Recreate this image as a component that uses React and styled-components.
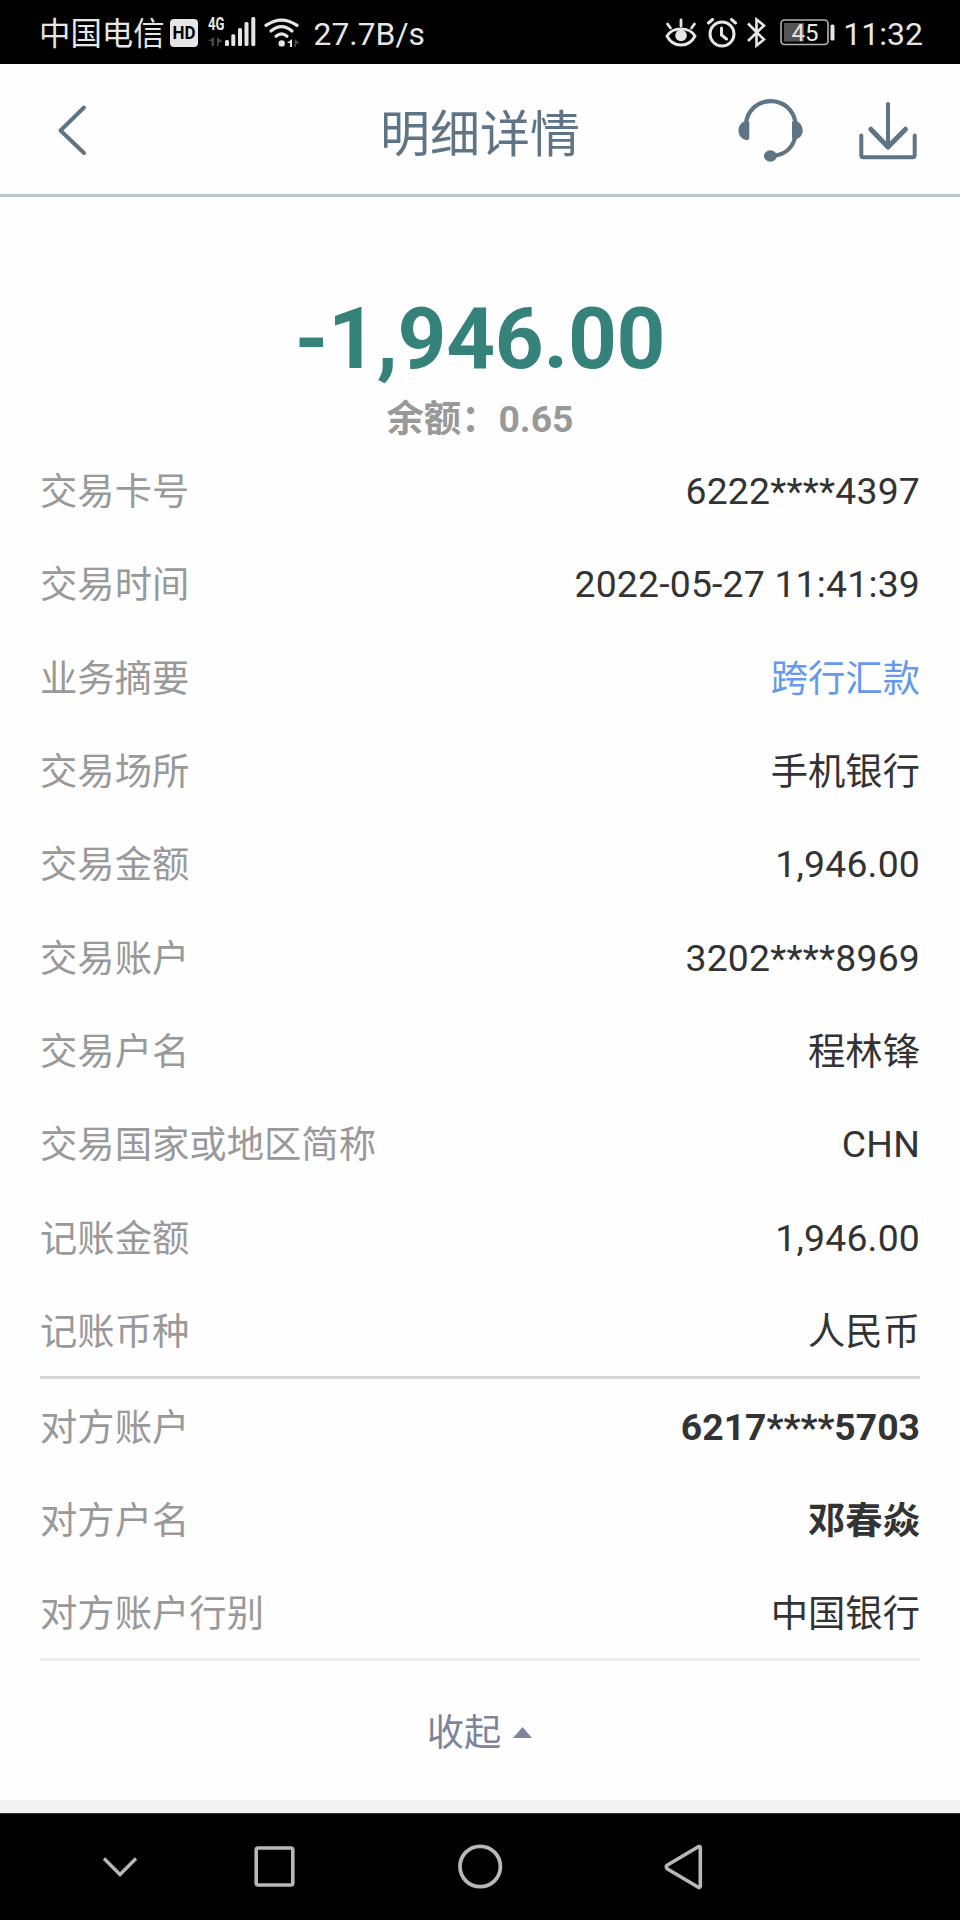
import React from "react";
import styled, { createGlobalStyle } from "styled-components";

const GlobalStyle = createGlobalStyle`
  * {
    box-sizing: border-box;
  }
  body {
    margin: 0;
    background-color: #fefefe;
    font-family: Roboto, "Noto Sans CJK SC", sans-serif;
  }
`;

const Screen = styled.div`
  display: flex;
  flex-direction: column;
  width: 960px;
  height: 1920px;
  overflow: hidden;
  background-color: #fefefe;
`;

const StatusBar = styled.div`
  display: flex;
  align-items: center;
  justify-content: space-between;
  height: 64px;
  padding: 2px 37px 0 39px;
  background-color: #000;
  color: #e6e6e6;
  line-height: 56px;
`;

const StatusGroup = styled.div`
  display: flex;
  align-items: center;
`;

const Carrier = styled.span`
  padding-top: 4px;
  font-size: 31.4px;
`;

const Speed = styled.span`
  margin-left: 14px;
  padding-top: 1px;
  font-size: 31.8px;
`;

const Clock = styled.span`
  margin-left: 8px;
  padding-top: 1px;
  font-size: 32px;
`;

const Icon = styled.svg`
  display: block;
  flex: none;
  margin-left: ${(props) => props.$left || 0}px;
`;

const Header = styled.header`
  display: grid;
  grid-template-columns: 1fr auto 1fr;
  align-items: center;
  height: 133px;
  padding: 0 42px 0 57px;
  border-bottom: 3px solid #b9c6c9;
  color: #5f7585;
`;

const Title = styled.h1`
  margin: 11px 0 0 -15px;
  font-size: 50px;
  font-weight: 400;
  line-height: 60px;
`;

const HeaderActions = styled.div`
  display: flex;
  align-items: center;
  justify-content: flex-end;
`;

const Summary = styled.section`
  display: flex;
  flex-direction: column;
  align-items: center;
  height: 248px;
  padding-top: 92px;
`;

const Amount = styled.div`
  color: #35827a;
  font-size: 85.33px;
  font-weight: 700;
  line-height: 100px;
  letter-spacing: -0.3px;
`;

const Balance = styled.div`
  margin-top: 5px;
  color: #999;
  font-size: 37.33px;
  font-weight: 700;
  line-height: 50px;
`;

const Details = styled.section`
  height: ${(props) => props.$height}px;
  margin: 0 40px;
  padding-top: ${(props) => props.$top || 0}px;
  border-bottom: 3px solid ${(props) => props.$line};
`;

const Row = styled.div`
  display: flex;
  justify-content: space-between;
  height: 93.33px;
  font-size: 37.33px;
`;

const Label = styled.span`
  color: #999;
  line-height: 94.6px;
`;

const Value = styled.span`
  color: ${(props) => (props.$link ? "#6699ec" : "#333")};
  font-weight: ${(props) => (props.$bold ? 700 : 400)};
  line-height: ${(props) => (props.$latin ? 93.33 : 94.6)}px;
  letter-spacing: ${(props) => (props.$latin && !props.$bold ? "0.2px" : "normal")};
`;

const Collapse = styled.div`
  display: flex;
  align-items: center;
  justify-content: center;
  height: 139px;
  padding: 5px 1px 0 0;
  color: #7e859b;
  font-size: 37.33px;
  line-height: 50px;
`;

const PageEdge = styled.div`
  height: 14px;
  border-bottom: 1px solid #333;
  background-color: #f3f3f3;
`;

const NavBar = styled.nav`
  display: flex;
  flex: 1;
  align-items: center;
  padding: 0 0 1px 101px;
  background-color: #000;
`;

const transaction = [
  { label: "交易卡号", value: "6222****4397", latin: true },
  { label: "交易时间", value: "2022-05-27 11:41:39", latin: true },
  { label: "业务摘要", value: "跨行汇款", link: true },
  { label: "交易场所", value: "手机银行" },
  { label: "交易金额", value: "1,946.00", latin: true },
  { label: "交易账户", value: "3202****8969", latin: true },
  { label: "交易户名", value: "程林锋" },
  { label: "交易国家或地区简称", value: "CHN", latin: true },
  { label: "记账金额", value: "1,946.00", latin: true },
  { label: "记账币种", value: "人民币" },
];

const counterparty = [
  { label: "对方账户", value: "6217****5703", latin: true, bold: true },
  { label: "对方户名", value: "邓春焱", bold: true },
  { label: "对方账户行别", value: "中国银行" },
];

const Rows = ({ items }) =>
  items.map((item) => (
    <Row key={item.label}>
      <Label>{item.label}</Label>
      <Value $link={item.link} $bold={item.bold} $latin={item.latin}>
        {item.value}
      </Value>
    </Row>
  ));

const HdIcon = () => (
  <Icon $left={5} width="28" height="28" viewBox="0 0 28 28">
    <rect width="28" height="28" rx="4" fill="#e6e6e6" />
    <text x="2.5" y="20.2" fontSize="17.6" fontWeight="700" textLength="23" lengthAdjust="spacingAndGlyphs">
      HD
    </text>
  </Icon>
);

const SignalIcon = () => (
  <Icon $left={10} width="48" height="40" viewBox="0 -4 48 40" fill="#e6e6e6">
    <text x="0" y="12.7" fontSize="17.5" fontWeight="700" textLength="16.5" lengthAdjust="spacingAndGlyphs">
      4G
    </text>
    <path d="M6 20v9H3.500v-5H0z M9 20v9h1.500v-3.500l4-1z" fill="#4a4a4a" />
    <rect x="17" y="23" width="4" height="6" rx="1.5" />
    <rect x="23.3" y="17.3" width="4" height="11.7" rx="1.5" />
    <rect x="30" y="11" width="4" height="18" rx="1.5" />
    <rect x="36.5" y="5" width="4" height="24" rx="1.5" />
    <rect x="43.3" y="0" width="4" height="29" rx="1.5" />
  </Icon>
);

const WifiIcon = () => (
  <Icon $left={8} width="36" height="30" viewBox="0 0 36 30">
    <g fill="none" stroke="#e6e6e6" strokeWidth="3.2" strokeLinecap="round">
      <path d="M2 7.400Q17.500-3.200 33 7.400" />
      <path d="M7 13Q17.500 4.400 28 13" />
      <path d="M12 18.200Q17.500 13.400 23 18.200" />
    </g>
    <circle cx="17.7" cy="25.4" r="3.2" fill="#e6e6e6" />
    <path d="M28 21v8h-2v-4h-3z" fill="#e6e6e6" />
    <path d="M30.500 21v8h1.500v-3l3.500-1z" fill="#4a4a4a" />
  </Icon>
);

const EyeIcon = () => (
  <Icon width="32" height="30" viewBox="0 0 32 30" fill="none" stroke="#e6e6e6" strokeWidth="2.8" strokeLinecap="round">
    <path d="M2 18C8 8.500 24 8.500 30 18C24 30 8 30 2 18Z" />
    <path d="M16 2v6M2.500 6l3 4M29.500 6l-3 4" />
    <circle cx="16" cy="17.5" r="5.8" fill="#e6e6e6" stroke="none" />
  </Icon>
);

const AlarmIcon = () => (
  <Icon $left={10} width="30" height="30" viewBox="0 0 30 30" fill="none" stroke="#e6e6e6" strokeWidth="3" strokeLinecap="round">
    <circle cx="15" cy="16" r="12" />
    <path d="M14.500 10v7l5 4M1.500 5l4-3.500M28.500 5l-4-3.500" />
  </Icon>
);

const BluetoothIcon = () => (
  <Icon $left={10} width="20" height="32" viewBox="0 0 20 32" fill="none" stroke="#e6e6e6" strokeWidth="2.6">
    <path d="M1 6.500l16 16-7.500 6V2.500L17 8.500 1 24" />
  </Icon>
);

const BatteryIcon = () => (
  <Icon $left={13} width="55" height="28" viewBox="0 0 55 28">
    <rect x="1" y="1" width="47" height="24.5" rx="3.5" fill="none" stroke="#b4b4b4" strokeWidth="1.6" />
    <rect x="4" y="4" width="20" height="18.5" fill="#555" />
    <rect x="50.5" y="5.5" width="4" height="16" rx="1.5" fill="#e6e6e6" />
    <text x="25" y="21.7" textAnchor="middle" fontSize="24" fill="#e6e6e6">
      45
    </text>
  </Icon>
);

const BackIcon = () => (
  <Icon width="32" height="54" viewBox="0 -1 32 54" fill="none" stroke="currentColor" strokeWidth="4" strokeLinecap="round" strokeLinejoin="round">
    <path d="M27 4.500L3.500 27.500L27 50" />
  </Icon>
);

const HeadsetIcon = () => (
  <Icon width="66" height="66" viewBox="0 -1 66 66">
    <path
      d="M8 27C9 13 20 4.200 32.700 4.200S56.500 13 57.500 27M57 41C54 51 47 57.500 36 58.700"
      fill="none"
      stroke="currentColor"
      strokeWidth="4.2"
    />
    <path
      d="M11.300 24.500v16.500q0 2.500-3 2C3 42 .5 38 .5 33.500S3 25.500 7 24z M54 24.500v16q0 2.500 3 2C62 41.500 64.700 38 64.700 33.500S62 25.500 58.500 24z"
      fill="currentColor"
    />
    <ellipse cx="32.4" cy="59" rx="6.5" ry="5.7" fill="currentColor" />
  </Icon>
);

const DownloadIcon = () => (
  <Icon $left={55} width="59" height="62" viewBox="0 0 59 62" fill="none" stroke="currentColor" strokeWidth="4" strokeLinecap="round" strokeLinejoin="round">
    <path d="M29 6v42" />
    <path d="M11.800 31.200L29 49L46.500 31.200" strokeWidth="5" />
    <path d="M2.300 37.500v19.500q0 2.200 2.200 2.200h49q2.200 0 2.200-2.200V37.500" />
  </Icon>
);

const NavIcons = () => (
  <>
    <Icon width="37" height="23" viewBox="0 0 37 23" fill="none" stroke="#b8b8b8" strokeWidth="3.4">
      <path d="M3 3.500l16 16L35 3.500" />
    </Icon>
    <Icon $left={116} width="41" height="41" viewBox="0 0 41 41" fill="none" stroke="#b8b8b8" strokeWidth="3.6">
      <rect x="2.2" y="2" width="36.6" height="37" rx="2" />
    </Icon>
    <Icon $left={163} width="45" height="45" viewBox="0 0 45 45" fill="none" stroke="#b8b8b8" strokeWidth="3.8">
      <circle cx="22.2" cy="22.5" r="20.2" />
    </Icon>
    <Icon $left={161} width="40" height="46" viewBox="0 0 40 46" fill="none" stroke="#b8b8b8" strokeWidth="3.6" strokeLinejoin="round">
      <path d="M36.300 3.500v39q-.5 1.500-2 .8L3.500 25q-2.500-2 0-4L34.300 2.700q1.500-.8 2 .8z" />
    </Icon>
  </>
);

const App = () => {
  return (
    <>
      <GlobalStyle />
      <Screen>
        <StatusBar>
          <StatusGroup>
            <Carrier>中国电信</Carrier>
            <HdIcon />
            <SignalIcon />
            <WifiIcon />
            <Speed>27.7B/s</Speed>
          </StatusGroup>
          <StatusGroup>
            <EyeIcon />
            <AlarmIcon />
            <BluetoothIcon />
            <BatteryIcon />
            <Clock>11:32</Clock>
          </StatusGroup>
        </StatusBar>
        <Header>
          <BackIcon />
          <Title>明细详情</Title>
          <HeaderActions>
            <HeadsetIcon />
            <DownloadIcon />
          </HeaderActions>
        </Header>
        <Summary>
          <Amount>-1,946.00</Amount>
          <Balance>余额：0.65</Balance>
        </Summary>
        <Details $height={934} $line="#d6d6d6">
          <Rows items={transaction} />
        </Details>
        <Details $height={282} $top={1.5} $line="#eee">
          <Rows items={counterparty} />
        </Details>
        <Collapse>
          收起
          <Icon $left={12} width="19" height="13" viewBox="0 0 19 13">
            <path d="M9.500 0L19 11H0z" fill="#7e859b" />
          </Icon>
        </Collapse>
        <PageEdge />
        <NavBar>
          <NavIcons />
        </NavBar>
      </Screen>
    </>
  );
};

export default App;
